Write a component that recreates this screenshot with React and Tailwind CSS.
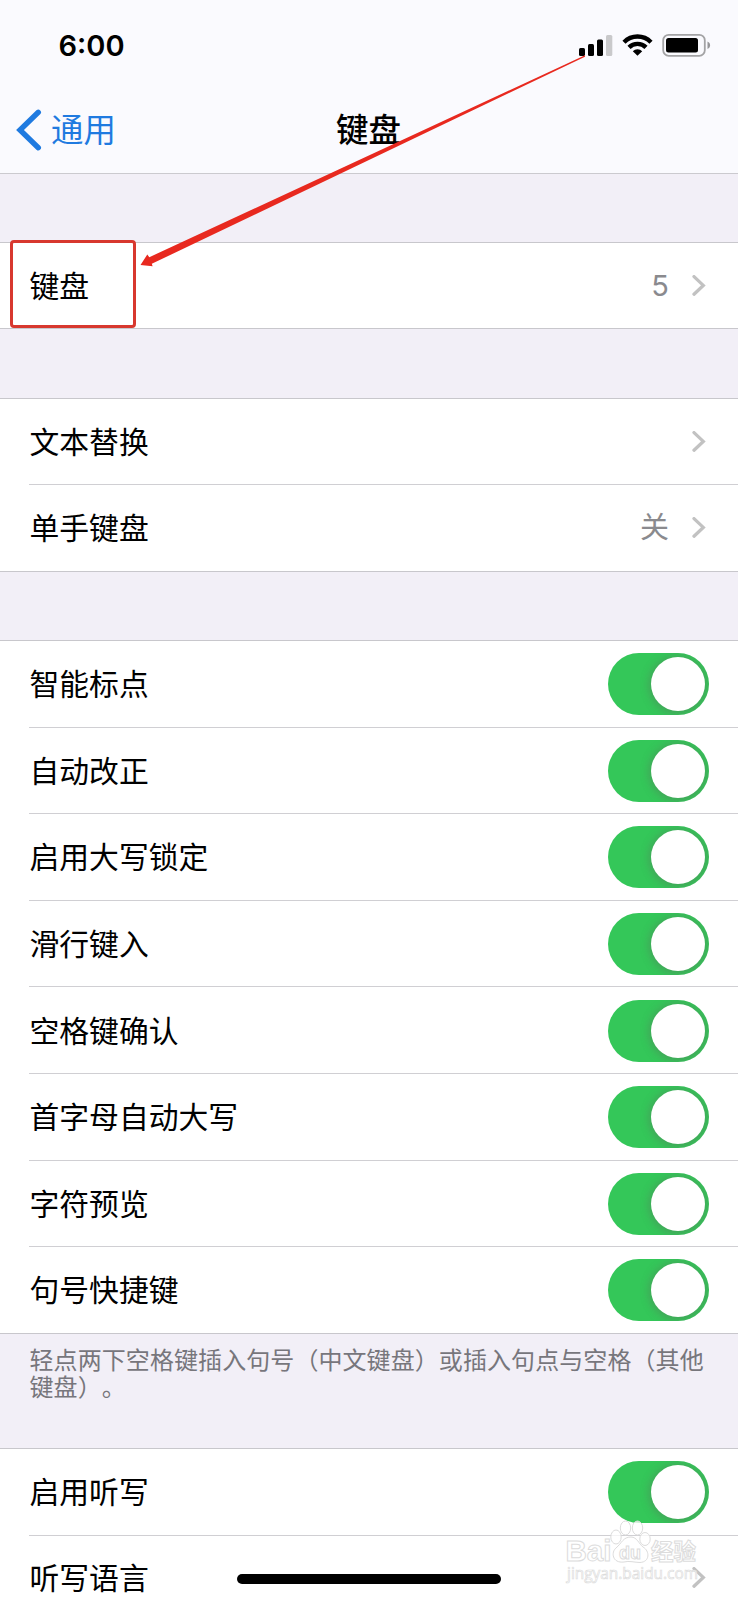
import React from "react";

const CJK = "font-['Inter','Noto_Sans_CJK_SC',sans-serif]";

function Chevron() {
  return (
    <svg className="block h-[22px] w-[14px]" viewBox="0 0 14 22" fill="none">
      <path d="M2 1.6 L11.3 10.4 L2 19.2" stroke="#c2c2c2" strokeWidth="3.3" strokeLinecap="round" strokeLinejoin="miter" />
    </svg>
  );
}

function Switch() {
  return (
    <span className="relative block h-[62px] w-[101px] overflow-hidden rounded-full bg-[#34c759]">
      <span className="absolute top-[4px] right-[4px] block size-[54px] rounded-full bg-white shadow-[0_1px_9px_2px_rgba(90,110,90,0.42)]" />
    </span>
  );
}

function Row({ label, value, toggle, last }) {
  return (
    <div className="ml-[29px]">
      <div className={`flex items-center justify-between pr-[29px] pl-[0.5px] ${toggle ? "h-[85.6px] pt-[0.9px]" : "h-[85.33px]"}`}>
        <span className="text-[29.8px] leading-[40px] text-black">{label}</span>
        {toggle ? (
          <Switch />
        ) : (
          <span className="flex items-center gap-[23px] pr-[3px]">
            {value && <span className="pt-px text-[29px] leading-[40px] text-[#8a8a8e]">{value}</span>}
            <Chevron />
          </span>
        )}
      </div>
      {!last && <div className="h-px bg-[#d0cfd3]" />}
    </div>
  );
}

function Group({ rows }) {
  return (
    <section className="border-y border-[#c8c7cc] bg-white">
      {rows.map((r, i) => (
        <Row key={r.label} {...r} last={i === rows.length - 1} />
      ))}
    </section>
  );
}

function StatusIcons() {
  return (
    <svg className="block h-[24px] w-[132px]" viewBox="579 33 132 24">
      <rect x="579" y="48" width="6" height="8" rx="1.5" />
      <rect x="588" y="44" width="6" height="12" rx="1.5" />
      <rect x="597" y="39.5" width="6" height="16.5" rx="1.5" />
      <rect x="606" y="35" width="6.3" height="21" rx="1.5" fill="#c9c9cb" />
      <g fill="none" stroke="#000" strokeWidth="4.4">
        <path d="M624 42.2 A19 19 0 0 1 651 42.2" />
        <path d="M629 47.4 A12 12 0 0 1 646 47.4" />
      </g>
      <path d="M632.8 51.3 A6.6 6.6 0 0 1 642.2 51.3 L637.5 55.8 Z" />
      <rect x="663.2" y="34.8" width="41.6" height="21" rx="5.5" fill="none" stroke="#a3a3a5" strokeWidth="1.8" />
      <rect x="666" y="38" width="32" height="14.6" rx="2.5" />
      <path d="M707.5 41.5 C711 43 711 47.5 707.5 49 Z" fill="#97979a" />
    </svg>
  );
}

function Watermark() {
  return (
    <svg className="absolute top-[1518px] left-[560px] h-[70px] w-[145px] overflow-visible" viewBox="560 1518 145 70">
      <g fill="#fff" fillOpacity="0.75" stroke="#dcdcdc" strokeWidth="1">
        <text x="565.5" y="1561" fontSize="30" fontWeight="700" fontFamily="Liberation Sans" textLength="46" lengthAdjust="spacingAndGlyphs">Bai</text>
        <ellipse cx="616" cy="1537" rx="5.2" ry="7" />
        <ellipse cx="625.5" cy="1528" rx="5.2" ry="7" />
        <ellipse cx="637.5" cy="1528" rx="5.2" ry="7" />
        <ellipse cx="645" cy="1539" rx="5.2" ry="6.5" />
        <path d="M631 1537 C637 1537 639 1544 643 1547 C650 1551 650 1562 640 1562.5 C635 1562.5 629 1560.5 624 1562 C612 1563.5 611 1552 616 1548 C622 1543 623 1537 631 1537 Z" />
        <text x="619" y="1558.5" fontSize="18" fontWeight="700" fontFamily="Liberation Sans" textLength="22" lengthAdjust="spacingAndGlyphs">du</text>
        <text x="651" y="1559.5" fontSize="22.5" fontWeight="700" fontFamily="Noto Sans CJK SC" textLength="45">经验</text>
        <text x="567" y="1579" fontSize="16.5" fontFamily="Open Sans" strokeWidth="0.7" textLength="131" lengthAdjust="spacingAndGlyphs">jingyan.baidu.com</text>
      </g>
    </svg>
  );
}

const toggles = ["智能标点", "自动改正", "启用大写锁定", "滑行键入", "空格键确认", "首字母自动大写", "字符预览", "句号快捷键"];

export default function App() {
  return (
    <div className={`relative h-[1600px] w-[738px] overflow-hidden bg-[#f2eff7] ${CJK}`}>
      <header className="h-[174px] border-b border-[#cbcacf] bg-[#fafafe]">
        <div className="flex h-[90px] items-center justify-between pr-[27px] pl-[58.5px]">
          <span className="pt-px text-[29px] leading-[40px] font-semibold text-black">6:00</span>
          <StatusIcons />
        </div>
        <div className="grid h-[80px] grid-cols-3 items-center">
          <div className="flex items-center gap-[9px] pl-[16px] text-[#1f7ae0]">
            <svg className="block h-[42px] w-[26px]" viewBox="0 0 26 42" fill="none">
              <path d="M22.3 3.3 L4 21 L22.3 38.7" stroke="currentColor" strokeWidth="5.4" strokeLinecap="round" />
            </svg>
            <span className="pt-[2px] text-[32.4px] leading-[44px]">通用</span>
          </div>
          <h1 className="pt-[2px] pr-[1px] text-center text-[32.5px] leading-[44px] font-medium text-black">键盘</h1>
        </div>
      </header>

      <main>
        <div className="pt-[68px]">
          <Group rows={[{ label: "键盘", value: "5" }]} />
        </div>
        <div className="pt-[68.67px]">
          <Group rows={[{ label: "文本替换" }, { label: "单手键盘", value: "关" }]} />
        </div>
        <div className="pt-[68.34px]">
          <Group rows={toggles.map((label) => ({ label, toggle: true }))} />
        </div>
        <p className="h-[114.2px] pt-[13px] pl-[29.5px] text-[24px] leading-[27.5px] tracking-[0.08px] whitespace-nowrap text-[#77767c] [text-spacing-trim:space-all]">
          轻点两下空格键插入句号（中文键盘）或插入句点与空格（其他
          <br />
          键盘）。
        </p>
        <Group rows={[{ label: "启用听写", toggle: true }, { label: "听写语言" }]} />
      </main>

      <div className="absolute top-[1574px] left-[237px] h-[10px] w-[264px] rounded-full bg-black" />
      <Watermark />

      <div className="absolute top-[240px] left-[10px] h-[88px] w-[126px] rounded-[4px] border-[3px] border-[#d8382f]" />
      <svg className="absolute top-[50px] left-[135px] h-[220px] w-[455px]" viewBox="135 50 455 220">
        <path d="M140.5 264.9 L147.3 254.4 L149.3 257.2 L585 55.3 L585 56.7 L151.8 263.8 L152.6 266.2 Z" fill="#e8291f" />
      </svg>
    </div>
  );
}
